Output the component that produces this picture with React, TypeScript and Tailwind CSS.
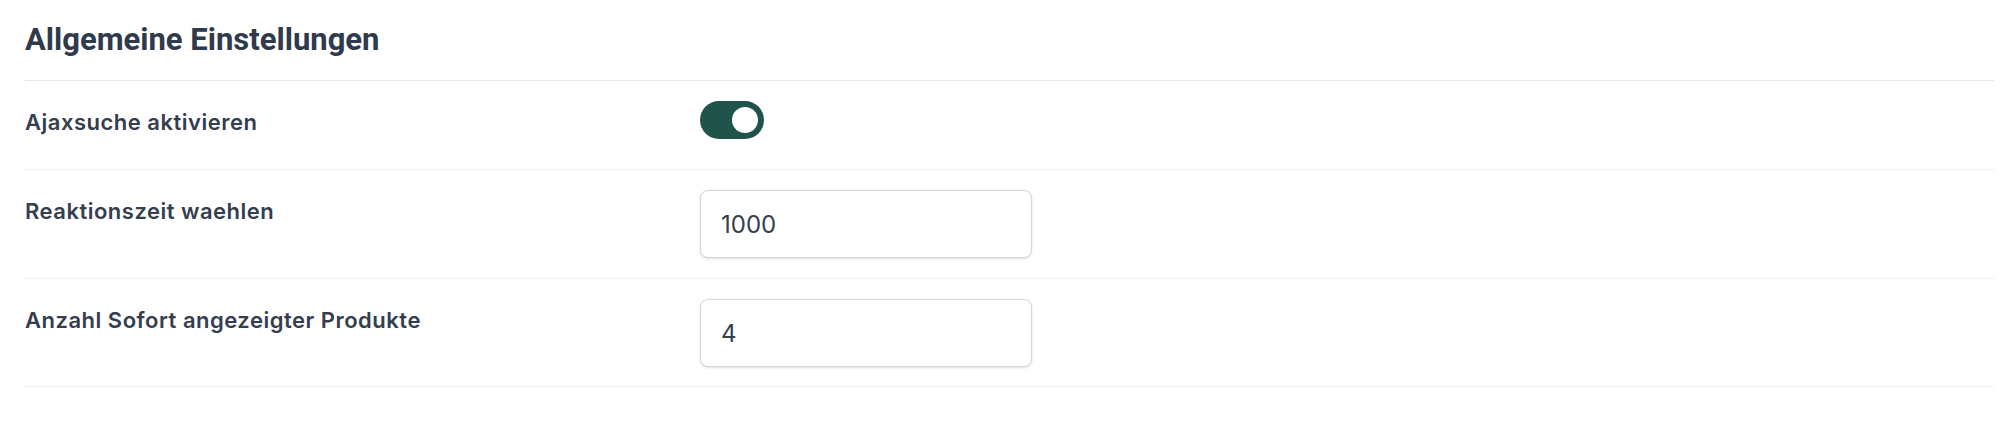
import React, { useState } from "react";

const labelClass =
  "w-[675px] shrink-0 pt-[7px] text-[22px] leading-[28px] font-semibold tracking-[0.5px] text-[#343e4f]";

function Toggle({ on, onChange }: { on: boolean; onChange: (v: boolean) => void }) {
  return (
    <button
      type="button"
      role="switch"
      aria-checked={on}
      onClick={() => onChange(!on)}
      className={`relative h-[38px] w-[64px] rounded-full ${on ? "bg-[#20544a]" : "bg-gray-300"}`}
    >
      <span
        className={`absolute top-[6px] h-[26px] w-[26px] rounded-full bg-white ${on ? "left-[32px]" : "left-[6px]"}`}
      />
    </button>
  );
}

function NumberField({ defaultValue }: { defaultValue: string }) {
  return (
    <input
      type="text"
      defaultValue={defaultValue}
      className="h-[68px] w-[332px] rounded-lg border border-[#d2d5db] bg-white px-5 font-['Inter',sans-serif] text-[24px] text-[#353d4e] shadow-sm outline-none"
    />
  );
}

export default function App() {
  const [ajax, setAjax] = useState(true);

  return (
    <div className="h-[424px] w-full bg-white pl-[25px] pr-[20px] font-['Inter',sans-serif]">
      <div className="flex h-[81px] items-center border-b border-[#e6e8eb]">
        <h2 className="font-['Roboto',sans-serif] text-[31px] font-bold text-[#2f3a4c]">
          Allgemeine Einstellungen
        </h2>
      </div>

      <div className="flex h-[89px] items-start border-b border-[#eceef0] py-5">
        <div className={labelClass}>Ajaxsuche aktivieren</div>
        <Toggle on={ajax} onChange={setAjax} />
      </div>

      <div className="flex h-[109px] items-start border-b border-[#eceef0] py-5">
        <div className={labelClass}>Reaktionszeit waehlen</div>
        <NumberField defaultValue="1000" />
      </div>

      <div className="flex h-[108px] items-start border-b border-[#eceef0] py-5">
        <div className={labelClass}>Anzahl Sofort angezeigter Produkte</div>
        <NumberField defaultValue="4" />
      </div>
    </div>
  );
}
